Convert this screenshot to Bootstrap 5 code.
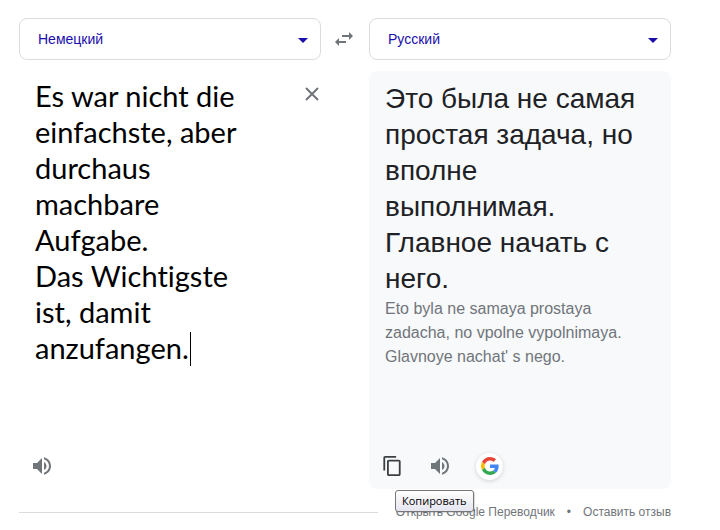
<!DOCTYPE html>
<html lang="ru">
<head>
<meta charset="utf-8">
<meta name="viewport" content="width=device-width, initial-scale=1">
<title>Переводчик</title>
<link href="https://cdn.jsdelivr.net/npm/bootstrap@5.3.0/dist/css/bootstrap.min.css" rel="stylesheet">
<style>
  body { font-family: "Liberation Sans", Arial, sans-serif; color: #202124; }
  .translator { padding: 18px 49px 0 19px; }
  .pair { display: grid; grid-template-columns: minmax(0, 1fr) 48px minmax(0, 1fr); row-gap: 11px; }
  .lang .form-select { height: 42px; padding: 0 36px 0 18px; border: 1px solid #dadce0; border-radius: 8px; background: #fff; color: #1a0dab; font-size: 14px; }
  .caret-down { right: 13px; top: 20px; width: 10px; height: 5px; fill: #1a0dab; pointer-events: none; }
  .icon-btn { color: #70757a; line-height: 0; }
  .pane { min-height: 418px; border-radius: 8px; }
  .pane-out { grid-column: 3; background: #f8f9fb; padding: 10px 24px 0 16px; }
  .pane-in { padding: 7px 0 0 16px; }
  .source-text { width: 220px; height: 288px; border: 0; outline: 0; resize: none; overflow: hidden; background: transparent; color: #000; font: 29px/36px Lato, sans-serif; font-variant-ligatures: none; }
  .text-caret { left: 171px; top: 261px; width: 1px; height: 34px; background: #000; }
  .result { font-size: 28px; line-height: 36px; }
  .translit { font-size: 16px; line-height: 24px; color: #70757a; }
  .actions { height: 46px; gap: 24px; margin-left: -5px; }
  .actions .icon-btn { width: 24px; height: 24px; }
  .actions .round { width: 27px; height: 27px; border-radius: 50%; background: #fff; box-shadow: 0 1px 4px rgba(32, 33, 36, .18); }
  .clear { margin: 8px 1px 0 0; }
  .foot { margin-top: 13px; font-size: 12px; line-height: 20px; color: #70757a; }
  .foot a { color: #70757a; }
  .rule { height: 1px; margin-right: 18px; background: #dadce0; }
  .tip { left: 26px; top: 419px; height: 22px; padding: 0 6px; border: 1px solid #767676; border-radius: 3px; background: linear-gradient(#fff, #e4e5f0); color: #000; font: 11px/20px "Open Sans", sans-serif; box-shadow: 1px 1px 1px rgba(0, 0, 0, .15); z-index: 2; }
</style>
<script src="https://cdn.jsdelivr.net/npm/bootstrap@5.3.0/dist/js/bootstrap.bundle.min.js"></script>
</head>
<body>
<main class="translator">
  <div class="pair">
    <div class="lang position-relative">
      <select class="form-select" aria-label="Исходный язык"><option>Немецкий</option></select>
      <svg class="caret-down position-absolute" viewBox="0 0 10 5" aria-hidden="true"><path d="M0 0h10L5 5z"/></svg>
    </div>
    <button class="icon-btn btn p-0 border-0" type="button" aria-label="Поменять языки">
      <svg width="20" height="14" viewBox="0 0 20 14" fill="currentColor" aria-hidden="true"><path d="M14 0l4 4-4 4V5H7V3h7zM4 6v3h7v2H4v3l-4-4z"/></svg>
    </button>
    <div class="lang position-relative">
      <select class="form-select" aria-label="Язык перевода"><option>Русский</option></select>
      <svg class="caret-down position-absolute" viewBox="0 0 10 5" aria-hidden="true"><path d="M0 0h10L5 5z"/></svg>
    </div>

    <section class="pane pane-in d-flex flex-column position-relative">
      <div class="d-flex justify-content-between align-items-start flex-grow-1">
        <textarea class="source-text p-0" aria-label="Исходный текст" spellcheck="false">Es war nicht die einfachste, aber durchaus machbare Aufgabe.
Das Wichtigste ist, damit anzufangen.</textarea>
        <button class="clear icon-btn btn p-0 border-0" type="button" aria-label="Очистить">
          <svg class="d-block" width="16" height="16" viewBox="0 0 16 16" fill="none" stroke="currentColor" stroke-width="2" aria-hidden="true"><path d="M2 2l12 12M14 2L2 14"/></svg>
        </button>
      </div>
      <span class="text-caret position-absolute"></span>
      <div class="actions d-flex align-items-center">
        <button class="icon-btn btn p-0 border-0 d-flex align-items-center justify-content-center" type="button" aria-label="Прослушать оригинал">
          <svg width="18" height="18" viewBox="3 3 18 18" fill="currentColor" aria-hidden="true"><path d="M3 9v6h4l5 5V4L7 9H3zm13.500 3c0-1.770-1.020-3.290-2.500-4.030v8.050c1.480-.73 2.500-2.250 2.500-4.020zM14 3.230v2.060c2.890.86 5 3.540 5 6.710s-2.110 5.850-5 6.710v2.060c4.010-.91 7-4.490 7-8.770s-2.990-7.860-7-8.770z"/></svg>
        </button>
      </div>
    </section>

    <section class="pane pane-out d-flex flex-column position-relative">
      <div class="flex-grow-1">
        <div class="result">Это была не самая простая задача, но вполне выполнимая.<br>Главное начать с него.</div>
        <div class="translit">Eto byla ne samaya prostaya zadacha, no vpolne vypolnimaya.<br>Glavnoye nachat' s nego.</div>
      </div>
      <div class="actions d-flex align-items-center">
        <button class="icon-btn btn p-0 border-0 d-flex align-items-center justify-content-center" type="button" aria-label="Копировать">
          <svg width="18" height="20" viewBox="2 1 19 22" fill="#3c4043" aria-hidden="true"><path d="M16 1H4c-1.100 0-2 .9-2 2v14h2V3h12V1zm3 4H8c-1.100 0-2 .9-2 2v14c0 1.100.9 2 2 2h11c1.100 0 2-.9 2-2V7c0-1.100-.9-2-2-2zm0 16H8V7h11v14z"/></svg>
        </button>
        <button class="icon-btn btn p-0 border-0 d-flex align-items-center justify-content-center" type="button" aria-label="Прослушать перевод">
          <svg width="18" height="18" viewBox="3 3 18 18" fill="currentColor" aria-hidden="true"><path d="M3 9v6h4l5 5V4L7 9H3zm13.500 3c0-1.770-1.020-3.290-2.500-4.030v8.050c1.480-.73 2.500-2.250 2.500-4.020zM14 3.230v2.060c2.890.86 5 3.540 5 6.710s-2.110 5.850-5 6.710v2.060c4.010-.91 7-4.490 7-8.770s-2.990-7.860-7-8.770z"/></svg>
        </button>
        <button class="round icon-btn btn p-0 border-0 d-flex align-items-center justify-content-center" type="button" aria-label="Искать в Google">
          <svg width="18" height="18" viewBox="0 0 48 48" aria-hidden="true"><path fill="#ea4335" d="M24 9.500c3.540 0 6.710 1.220 9.210 3.600l6.850-6.850C35.900 2.380 30.470 0 24 0 14.620 0 6.510 5.380 2.560 13.220l7.980 6.190C12.430 13.720 17.740 9.500 24 9.500z"/><path fill="#4285f4" d="M46.980 24.550c0-1.570-.15-3.090-.38-4.550H24v9.020h12.940c-.58 2.960-2.260 5.480-4.780 7.180l7.730 6c4.510-4.180 7.090-10.360 7.090-17.650z"/><path fill="#fbbc05" d="M10.530 28.590c-.48-1.450-.76-2.990-.76-4.590s.27-3.140.76-4.590l-7.980-6.190C.92 16.460 0 20.120 0 24c0 3.880.92 7.540 2.560 10.780z"/><path fill="#34a853" d="M24 48c6.480 0 11.930-2.130 15.890-5.810l-7.730-6c-2.150 1.450-4.920 2.300-8.160 2.300-6.260 0-11.570-4.220-13.470-9.910l-7.980 6.190C6.510 42.620 14.620 48 24 48z"/></svg>
        </button>
      </div>
      <div class="tip position-absolute" role="tooltip">Копировать</div>
    </section>
  </div>

  <footer class="foot d-flex align-items-center">
    <div class="rule flex-grow-1"></div>
    <a class="text-decoration-none text-nowrap" href="#">Открыть Google Переводчик</a>
    <span class="px-2 mx-1">•</span>
    <a class="text-decoration-none text-nowrap" href="#">Оставить отзыв</a>
  </footer>
</main>
</body>
</html>
